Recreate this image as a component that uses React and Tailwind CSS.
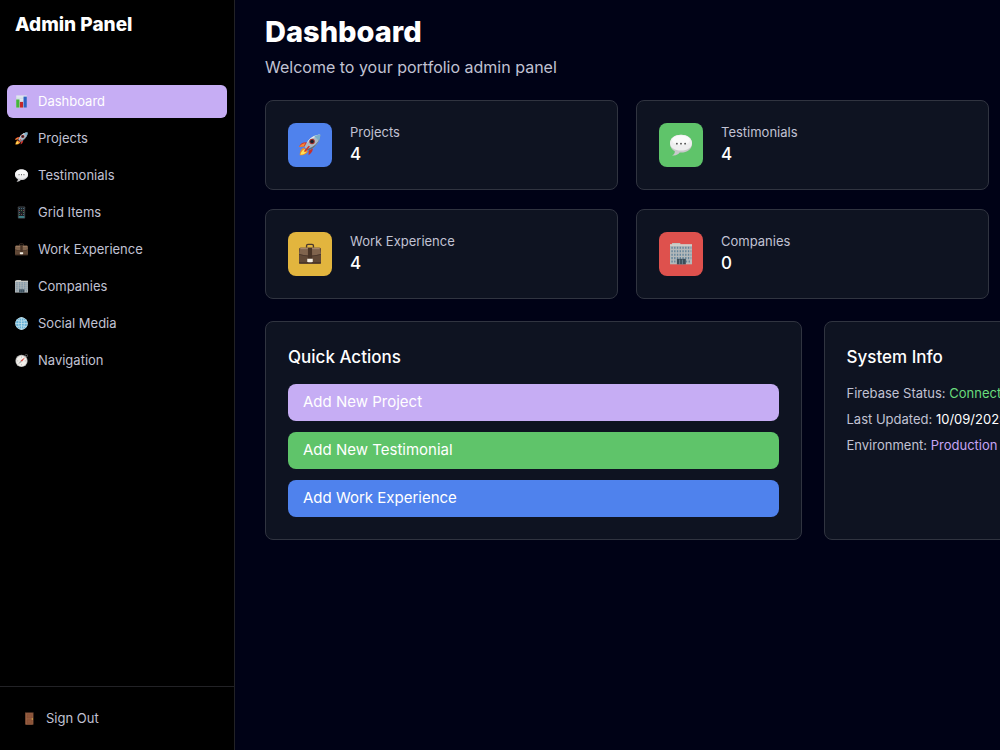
import React from 'react';

const ChartIcon = ({ className }) => (
    <svg viewBox="0 0 32 32" className={className} aria-hidden="true">
        <rect x="3" y="1" width="26" height="30" fill="#dfe6ee" />
        <path d="M3 8h26M3 15h26M3 22h26" stroke="#b9c9da" strokeWidth="1" />
        <rect x="3" y="11" width="8" height="20" fill="#46b53c" />
        <rect x="12" y="17" width="8" height="14" fill="#c4282b" />
        <rect x="21" y="4" width="8" height="27" fill="#2f62c4" />
    </svg>
);

const RocketIcon = ({ className }) => (
    <svg viewBox="0 0 32 32" className={className} aria-hidden="true">
        <path d="M10 12c-5 0-8 2-10 7l8-1 5-5z" fill="#d8392b" />
        <path d="M9 13c-4 1-7 3-9 6l7-1z" fill="#f08a35" />
        <path d="M20 19c1 4-1 8-6 12v-8l4-5z" fill="#c9302a" />
        <path d="M7 20c-4 1-6 6-6 11 5 0 10-1 12-6z" fill="#ef8b22" />
        <path d="M8 22c-3 1-5 4-6 8 4 0 7-2 9-4z" fill="#ffe15a" />
        <path d="M31 1c-8 0-14 4-18 9-2 3-4 6-5 9l5 5c4-1 7-3 10-6 5-5 8-10 8-17z" fill="#aab8c4" />
        <path d="M31 1c-1 8-5 14-12 18l-8 3 2 2c4-1 7-3 10-6 5-5 8-10 8-17z" fill="#5b6d7e" />
        <path d="M31 1c-8 0-14 4-18 9l-2 4C15 8 22 4 31 1z" fill="#e6edf1" />
        <path d="M31 1c-3 0-6 1-9 2l7 7c1-3 2-6 2-9z" fill="#78aeca" />
        <circle cx="19" cy="11" r="4" fill="#a5302a" />
        <circle cx="19" cy="11" r="2.6" fill="#182432" />
        <path d="M14 17l2 1-7 8-2-1z" fill="#cf3428" />
    </svg>
);

const SpeechIcon = ({ className }) => (
    <svg viewBox="0 0 32 32" className={className} aria-hidden="true">
        <path d="M16 1C7 1 0 6 0 14c0 5 3 9 7 11 0 3-1 5-4 6 5 1 9-1 11-4h2c9 0 16-5 16-13S25 1 16 1z" fill="#c9c9cb" />
        <path d="M16 1C7 1 0 6 0 13s7 11 16 11 16-4 16-11S25 1 16 1z" fill="#eeeeef" />
        <ellipse cx="16" cy="9" rx="13" ry="7" fill="#fafafa" />
        <circle cx="10" cy="14" r="1.4" fill="#555" />
        <circle cx="16" cy="14" r="1.4" fill="#555" />
        <circle cx="22" cy="14" r="1.4" fill="#555" />
    </svg>
);

const PhoneIcon = ({ className }) => (
    <svg viewBox="0 0 32 32" className={className} aria-hidden="true">
        <rect x="7" y="1" width="18" height="30" rx="2" fill="#484c50" />
        <rect x="9" y="3" width="14" height="26" fill="#1c2126" />
        <path d="M10 6h2M15 6h2M20 6h2M10 16h2M20 21h2" stroke="#5d93b0" strokeWidth="2" />
        <path d="M10 11h2M20 11h2M15 21h2" stroke="#b05d5a" strokeWidth="2" />
        <path d="M15 11h2M20 16h2M10 21h2" stroke="#6aa363" strokeWidth="2" />
        <path d="M9 27h14" stroke="#52b8c0" strokeWidth="3" />
    </svg>
);

const BriefcaseIcon = ({ className }) => (
    <svg viewBox="0 0 32 32" className={className} aria-hidden="true">
        <path d="M11 7V4q0-2 2-2h6q2 0 2 2v3" fill="none" stroke="#4b382d" strokeWidth="2" />
        <rect x="0" y="7" width="32" height="23" rx="2" fill="#604836" />
        <path d="M2 7h28l2 9q-16 5-32 0z" fill="#80644d" />
        <path d="M2 7h28v2H2z" fill="#a58468" />
        <path d="M0 16q16 5 32 0v1q-16 5-32 0z" fill="#47342a" />
        <rect x="13" y="7" width="6" height="16" fill="#493426" />
        <path d="M12 23h8v4l-2 2h-4l-2-2z" fill="#f3eee3" />
        <path d="M0 28h32v2H0z" fill="#453127" />
    </svg>
);

const BuildingIcon = ({ className }) => (
    <svg viewBox="0 0 32 32" className={className} aria-hidden="true">
        <rect x="3" y="0" width="12" height="4" fill="#bfc1bc" />
        <rect x="0" y="2" width="32" height="29" fill="#b4b9ba" />
        <rect x="0" y="2" width="32" height="2" fill="#d6d5ce" />
        <path d="M2 7h29M2 12h29M2 17h29M2 22h29" stroke="#64849a" strokeWidth="3" strokeDasharray="2 2" />
        <path d="M2 27h8M23 27h8" stroke="#64849a" strokeWidth="3" strokeDasharray="2 2" />
        <rect x="10" y="23" width="13" height="8" fill="#3b4d59" />
        <path d="M14 24v7M18 24v7" stroke="#7e9aaa" strokeWidth="1" />
    </svg>
);

const GlobeIcon = ({ className }) => (
    <svg viewBox="0 0 32 32" className={className} aria-hidden="true">
        <circle cx="16" cy="16" r="15" fill="#65b0d6" />
        <g fill="none" stroke="#c5e3ed" strokeWidth="1.8">
            <circle cx="16" cy="16" r="14.5" />
            <ellipse cx="16" cy="16" rx="7" ry="15" />
            <path d="M16 1v30M1 16h30M4 8q12 5 24 0M4 24q12-5 24 0" />
        </g>
    </svg>
);

const CompassIcon = ({ className }) => (
    <svg viewBox="0 0 32 32" className={className} aria-hidden="true">
        <circle cx="28" cy="4" r="3" fill="none" stroke="#6e6e6e" strokeWidth="2" />
        <circle cx="16" cy="17" r="15" fill="#b8b8b6" />
        <circle cx="16" cy="17" r="13" fill="#f2f0eb" />
        <path d="M16 6v3M16 25v3M5 17h3M24 17h3" stroke="#777" strokeWidth="1" />
        <path d="M25 8l-8 11-3-3z" fill="#d6413b" />
        <path d="M7 26l7-10 3 3z" fill="#a9a9a9" />
    </svg>
);

const DoorIcon = ({ className }) => (
    <svg viewBox="0 0 32 32" className={className} aria-hidden="true">
        <rect x="5" y="1" width="21" height="30" fill="#6d4430" />
        <rect x="7" y="3" width="17" height="28" fill="#9b6244" />
        <path d="M10 6h11v9H10zM10 19h11v9H10z" fill="#8f563b" stroke="#7c4830" strokeWidth="1" />
        <circle cx="23" cy="17" r="1.8" fill="#e0b545" />
    </svg>
);

const navItems = [
    { label: 'Dashboard', Icon: ChartIcon },
    { label: 'Projects', Icon: RocketIcon },
    { label: 'Testimonials', Icon: SpeechIcon },
    { label: 'Grid Items', Icon: PhoneIcon },
    { label: 'Work Experience', Icon: BriefcaseIcon },
    { label: 'Companies', Icon: BuildingIcon },
    { label: 'Social Media', Icon: GlobeIcon },
    { label: 'Navigation', Icon: CompassIcon },
];

const stats = [
    { label: 'Projects', value: 4, Icon: RocketIcon, color: 'bg-[#4f82ed]', column: 'col-start-1' },
    { label: 'Testimonials', value: 4, Icon: SpeechIcon, color: 'bg-[#5fc46a]', column: 'col-start-2' },
    { label: 'Work Experience', value: 4, Icon: BriefcaseIcon, color: 'bg-[#e2b53e]', column: 'col-start-1' },
    { label: 'Companies', value: 0, Icon: BuildingIcon, color: 'bg-[#de514d]', column: 'col-start-2' },
];

const actions = [
    { label: 'Add New Project', color: 'bg-[#c6adf4]' },
    { label: 'Add New Testimonial', color: 'bg-[#5fc46a]' },
    { label: 'Add Work Experience', color: 'bg-[#4f82ed]' },
];

const Sidebar = () => (
    <aside className="flex w-[235px] shrink-0 flex-col border-r border-[#222226] bg-black">
        <div className="px-[15px] pt-[11px] pb-[47px]">
            <h2 className="text-[19px] leading-[27px] font-extrabold text-white">Admin Panel</h2>
        </div>
        <nav className="flex flex-1 flex-col gap-1 px-[7px]">
            {navItems.map(({ label, Icon }, index) => (
                <a
                    key={label}
                    href="#"
                    className={`flex h-[33px] items-center gap-[10px] rounded-md px-2 text-[13px] ${
                        index === 0 ? 'bg-[#c6adf4] text-white' : 'text-[#c1c2d3]'
                    }`}
                >
                    <Icon className="size-[13px]" />
                    {label}
                </a>
            ))}
        </nav>
        <div className="border-t border-[#222226] px-[15px] py-[15px]">
            <button className="flex h-[33px] w-full items-center gap-[10px] px-2 text-[13px] text-[#c1c2d3]">
                <DoorIcon className="size-[13px]" />
                Sign Out
            </button>
        </div>
    </aside>
);

const App = () => {
    return (
        <div className="flex min-h-screen overflow-hidden bg-[#000216] font-['Inter',sans-serif]">
            <Sidebar />
            <main className="flex-1 px-[30px] pt-[15px]">
                <div className="min-w-[1095px]">
                    <header className="mb-[22px]">
                        <h1 className="text-[29px] leading-[33px] font-extrabold text-white">Dashboard</h1>
                        <p className="mt-2 text-[16px] leading-[22px] text-[#c1c2d3]">
                            Welcome to your portfolio admin panel
                        </p>
                    </header>

                    {/* Stats */}
                    <div className="mb-[22px] grid grid-cols-3 gap-x-[18px] gap-y-[19px]">
                        {stats.map(({ label, value, Icon, color, column }) => (
                            <div
                                key={label}
                                className={`flex items-center gap-[18px] rounded-lg border border-[#303440] bg-[#0e1321] p-[22px] ${column}`}
                            >
                                <div className={`flex size-[44px] items-center justify-center rounded-lg ${color}`}>
                                    <Icon className="size-[22px]" />
                                </div>
                                <div>
                                    <p className="text-[13px] leading-[18px] text-[#c1c2d3]">{label}</p>
                                    <p className="text-[17px] leading-[26px] font-medium text-white">{value}</p>
                                </div>
                            </div>
                        ))}
                    </div>

                    <div className="grid grid-cols-2 gap-[22px]">
                        {/* Quick Actions */}
                        <section className="rounded-lg border border-[#303440] bg-[#0e1321] p-[22px]">
                            <h3 className="mb-[14px] text-[17px] leading-[26px] font-medium text-white">
                                Quick Actions
                            </h3>
                            <div className="flex flex-col gap-[11px]">
                                {actions.map(({ label, color }) => (
                                    <button
                                        key={label}
                                        className={`h-[37px] rounded-lg px-[15px] text-left text-[15px] text-white ${color}`}
                                    >
                                        {label}
                                    </button>
                                ))}
                            </div>
                        </section>

                        {/* System Info */}
                        <section className="rounded-lg border border-[#303440] bg-[#0e1321] p-[22px]">
                            <h3 className="mb-[14px] text-[17px] leading-[26px] font-medium text-white">
                                System Info
                            </h3>
                            <div className="flex flex-col gap-2 text-[13px] leading-[18px] text-[#c1c2d3]">
                                <p>
                                    Firebase Status: <span className="text-[#69db7c]">Connected</span>
                                </p>
                                <p>
                                    Last Updated: <span className="text-white">10/09/2025</span>
                                </p>
                                <p>
                                    Environment: <span className="text-[#c6a5f5]">Production</span>
                                </p>
                            </div>
                        </section>
                    </div>
                </div>
            </main>
        </div>
    );
};

export default App;
